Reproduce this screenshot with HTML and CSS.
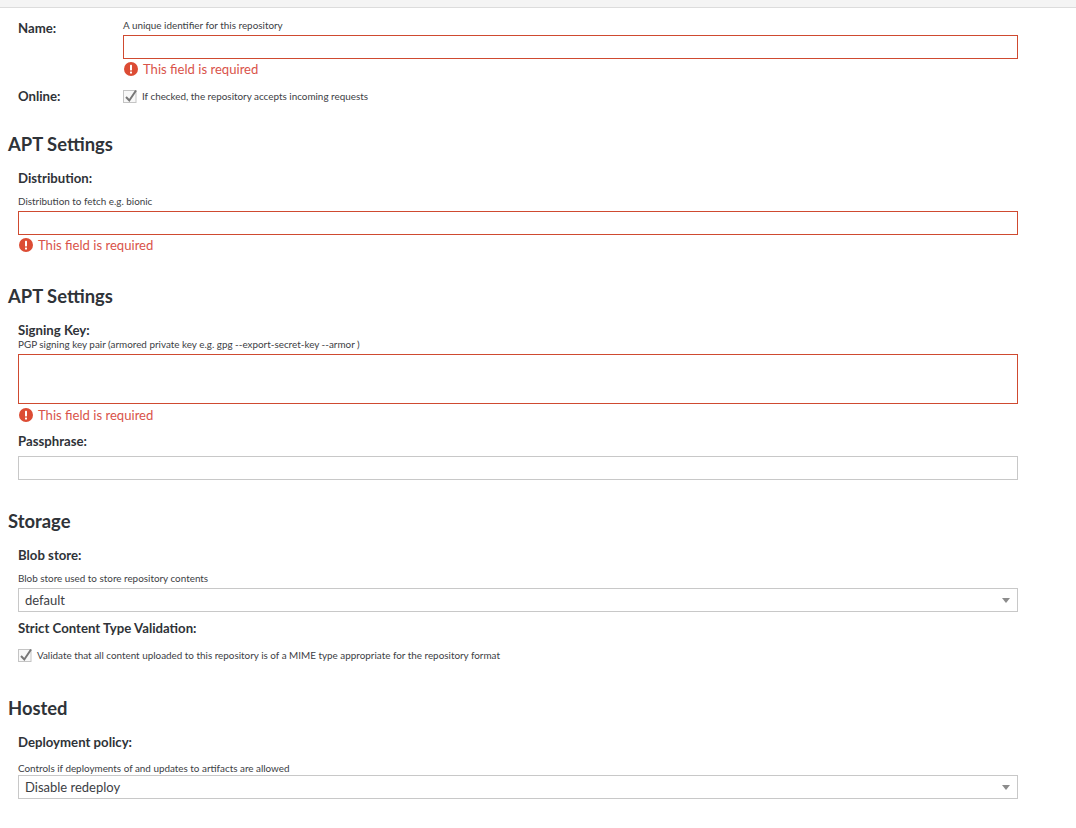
FILE: index.html
```html
<!DOCTYPE html>
<html lang="en">
<head>
<meta charset="utf-8">
<title>Repository settings</title>
<link rel="stylesheet" href="styles.css">
</head>
<body>
<div class="topbar"></div>
<main class="form">
  <div class="inline-field name-field">
    <div class="label inline-label">Name:</div>
    <div class="inline-body">
      <div class="help">A unique identifier for this repository</div>
      <div class="input invalid"></div>
      <div class="error"><svg class="err-icon" viewBox="0 0 14 14"><circle cx="7" cy="7" r="7"/><rect x="6" y="2.8" width="2" height="5.6" rx=".6"/><rect x="6" y="9.4" width="2" height="2" rx=".5"/></svg><span>This field is required</span></div>
    </div>
  </div>
  <div class="inline-field online-field">
    <div class="label inline-label">Online:</div>
    <label class="check"><svg class="box" viewBox="0 0 14 14"><rect x=".5" y="1.5" width="12.5" height="12"/><path d="M3 8l3.3 3.5L13 1.5"/></svg><span>If checked, the repository accepts incoming requests</span></label>
  </div>

  <h2 class="first-heading">APT Settings</h2>
  <div class="block dist">
    <div class="label">Distribution:</div>
    <div class="help gap-help">Distribution to fetch e.g. bionic</div>
    <div class="input invalid"></div>
    <div class="error"><svg class="err-icon" viewBox="0 0 14 14"><circle cx="7" cy="7" r="7"/><rect x="6" y="2.8" width="2" height="5.6" rx=".6"/><rect x="6" y="9.4" width="2" height="2" rx=".5"/></svg><span>This field is required</span></div>
  </div>

  <h2 class="second-heading">APT Settings</h2>
  <div class="block signing">
    <div class="label">Signing Key:</div>
    <div class="help tight-help">PGP signing key pair (armored private key e.g. gpg --export-secret-key --armor )</div>
    <div class="input area invalid"></div>
    <div class="error area-error"><svg class="err-icon" viewBox="0 0 14 14"><circle cx="7" cy="7" r="7"/><rect x="6" y="2.8" width="2" height="5.6" rx=".6"/><rect x="6" y="9.4" width="2" height="2" rx=".5"/></svg><span>This field is required</span></div>
    <div class="label pass-label">Passphrase:</div>
    <div class="input"></div>
  </div>

  <h2 class="storage-heading">Storage</h2>
  <div class="block blob">
    <div class="label">Blob store:</div>
    <div class="help gap-help">Blob store used to store repository contents</div>
    <div class="input select"><span>default</span><i class="caret"></i></div>
    <div class="label strict-label">Strict Content Type Validation:</div>
    <label class="check strict-check"><svg class="box" viewBox="0 0 14 14"><rect x=".5" y="1.5" width="12.5" height="12"/><path d="M3 8l3.3 3.5L13 1.5"/></svg><span>Validate that all content uploaded to this repository is of a MIME type appropriate for the repository format</span></label>
  </div>

  <h2 class="hosted-heading">Hosted</h2>
  <div class="block deploy">
    <div class="label">Deployment policy:</div>
    <div class="help deploy-help">Controls if deployments of and updates to artifacts are allowed</div>
    <div class="input select"><span>Disable redeploy</span><i class="caret"></i></div>
  </div>
</main>
</body>
</html>
```
FILE: styles.css
```css
* { box-sizing: border-box; }
html, body { margin: 0; padding: 0; background: #fff; }
body {
  height: 828px;
  overflow: hidden;
  font-family: "Lato", "Open Sans", "Liberation Sans", sans-serif;
  color: #2f3338;
}
.topbar {
  height: 8px;
  background: #f4f4f4;
  border-bottom: 1px solid #dcdcdc;
}
.form { padding: 0 8px; width: 1026px; }
.inline-field { display: flex; padding-left: 10px; }
.name-field { padding-top: 11px; }
.inline-label { width: 105px; flex: none; }
.inline-body { flex: 1; }
.label {
  font-size: 13.2px;
  font-weight: 700;
  line-height: 18px;
  color: #2f3338;
}
.help {
  font-size: 9.9px;
  line-height: 12px;
  color: #3c4044;
}
.inline-body > .help { margin-bottom: 4px; }
.input {
  height: 24px;
  border: 1px solid #c8c8c8;
  background: #fff;
}
.input.invalid { border-color: #cf4a30; }
.input.area { height: 50px; }
.error {
  display: flex;
  align-items: center;
  gap: 5px;
  height: 20px;
  font-size: 13.1px;
  color: #d9534a;
}
.area-error { height: 21px; padding-top: 1px; }
.err-icon { width: 14px; height: 14px; margin-left: 1px; flex: none; }
.err-icon circle { fill: #dc4c34; }
.err-icon rect { fill: #fff; }
.check {
  display: flex;
  align-items: center;
  gap: 5px;
  font-size: 9.9px;
  color: #3c4044;
}
.box { width: 14px; height: 14px; flex: none; overflow: visible; }
.box rect { fill: #f8f8f8; stroke: #c4c4c4; stroke-width: 1; }
.box path { fill: none; stroke: #777; stroke-width: 2; }
.online-field { margin-top: 8px; align-items: center; height: 18px; }
.block { padding-left: 10px; }
h2 {
  margin: 0;
  font-size: 18.4px;
  font-weight: 700;
  line-height: 24px;
  color: #2f3338;
}
.first-heading { margin-top: 27px; }
.dist { margin-top: 13px; }
.gap-help { margin-top: 8px; margin-bottom: 4px; }
.tight-help { margin-top: -1px; margin-bottom: 4px; }
.second-heading { margin-top: 29px; }
.signing { margin-top: 13px; }
.pass-label { margin-top: 7px; margin-bottom: 6px; }
.storage-heading { margin-top: 29px; }
.blob { margin-top: 13px; }
.select {
  display: flex;
  align-items: center;
  justify-content: space-between;
  padding: 0 7px 0 6px;
  font-size: 13px;
  color: #3c4044;
}
.caret {
  width: 0;
  height: 0;
  border-left: 4.5px solid transparent;
  border-right: 4.5px solid transparent;
  border-top: 5px solid #8c8c8c;
}
.strict-label { margin-top: 7px; }
.strict-check { margin-top: 10px; height: 16px; }
.hosted-heading { margin-top: 33px; }
.deploy { margin-top: 13px; }
.deploy-help { margin-top: 11px; margin-bottom: 1px; }
```
